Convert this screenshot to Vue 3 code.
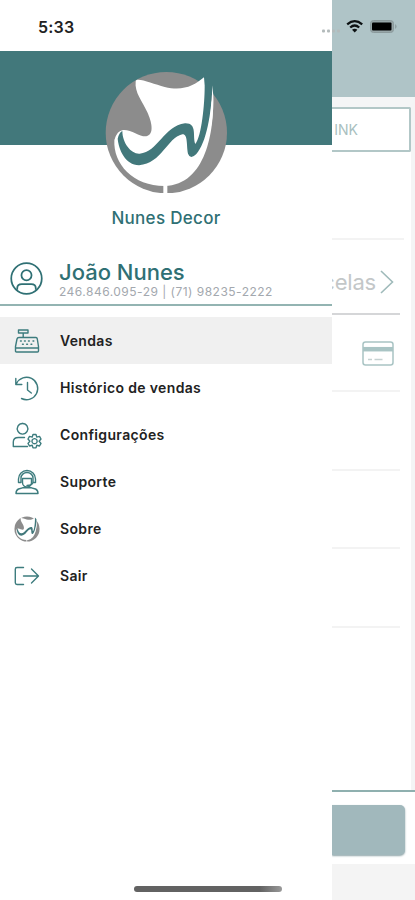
<template>
  <div class="screen">
    <aside class="drawer">
      <div class="status-bar">5:33</div>
      <header class="banner">
        <svg class="brand-logo" viewBox="46 36 368 364">
          <use href="#brand" />
        </svg>
      </header>
      <h1 class="brand-name">Nunes Decor</h1>

      <section class="profile">
        <svg class="avatar" viewBox="0 0 32 32">
          <circle cx="16" cy="16" r="14.8" />
          <circle cx="16" cy="12.8" r="4.9" />
          <path d="M7 27v-1.5Q7 21.500 11.500 21.500h9Q25 21.500 25 25.500V27" />
        </svg>
        <div class="profile-text">
          <div class="profile-name">{{ user.name }}</div>
          <div class="profile-info">{{ user.document }} | {{ user.phone }}</div>
        </div>
      </section>

      <nav class="menu">
        <a
          v-for="item in items"
          :key="item.id"
          :class="['menu-item', { active: activeId === item.id }]"
          @click="activeId = item.id"
        >
          <svg v-if="item.id === 'about'" class="menu-icon" viewBox="25 15 410 406">
            <use href="#brand" />
          </svg>
          <svg v-else class="menu-icon line" viewBox="0 0 30 28">
            <path v-for="d in item.paths" :key="d" :d="d" />
          </svg>
          <span>{{ item.label }}</span>
        </a>
      </nav>
    </aside>

    <main class="page">
      <div class="page-header"></div>
      <div class="page-body">
        <div class="link-box">INK</div>
        <div class="row first"></div>
        <div class="row parcels">
          <span>celas</span>
          <svg class="chevron" viewBox="0 0 14 24"><path d="M1 1l11.500 11L1 23" /></svg>
        </div>
        <div class="row card">
          <svg class="card-icon" viewBox="0 0 32 25">
            <rect x="1" y="1" width="30" height="23" rx="2.5" />
            <path class="stripe" d="M1 8.200h30" />
            <path class="digits" d="M6 18.500h4M12.500 18.500h8" />
          </svg>
        </div>
        <div class="row plain"></div>
        <div class="row plain"></div>
        <div class="row plain"></div>
      </div>
      <div class="page-action"><button type="button"></button></div>
      <div class="page-footer"></div>
    </main>

    <svg class="status-icons" viewBox="0 0 76 16">
      <g fill="#b3babb">
        <rect x="0" y="10.500" width="3" height="3" rx="1" />
        <rect x="5" y="10.500" width="3" height="3" rx="1" />
        <rect x="10" y="10.500" width="3" height="3" rx="1" />
        <rect x="15" y="10.500" width="3" height="3" rx="1" />
      </g>
      <g fill="none" stroke="#0c1112" stroke-width="2.3">
        <path d="M25.200 5.300Q32.700-1 40.200 5.300" />
        <path d="M28.200 8.500Q32.700 4.600 37.200 8.500" />
      </g>
      <path d="M30 10.700Q32.700 8.700 35.400 10.700L32.700 13.500z" fill="#0c1112" />
      <rect x="48.5" y="1.5" width="23" height="12" rx="3" fill="#97a6a8" stroke="#8b9a9c" />
      <rect x="50" y="3.500" width="19.500" height="8" rx="1" fill="#000" />
      <path d="M73.300 5v5q2.400-2.500 0-5" fill="#849294" />
    </svg>
    <div class="home-indicator"></div>

    <svg width="0" height="0" class="defs">
      <defs>
        <g id="brand">
          <circle cx="230" cy="218" r="182" fill="#8c8c8c" />
          <path
            fill="#fff"
            d="M138 64C140 50 190 72 225 81C280 94 312 78 343 52L355 150L370 112C374 210 350 376 225 378C130 378 70 312 74 240Q82 212 100 210C125 208 150 231 170 229C195 224 186 185 173 157C158 124 134 98 138 64z"
          />
          <path
            fill="#42787b"
            d="M84 236Q88 218 98 213C98 250 125 283 150 281C205 277 222 198 286 190C324 189 308 230 317 252C336 230 345 130 345 82V52L368 76C366 160 350 250 320 282Q302 300 295 281C290 255 295 222 278 223C232 234 217 310 148 316C107 314 87 270 84 236z"
          />
          <path fill="#fff" d="M368 76L371 108C373 190 355 250 334 288C358 230 366 150 368 76zM221 365h12v38h-12z" />
        </g>
      </defs>
    </svg>
  </div>
</template>

<script setup>
import { ref } from 'vue'

const user = {
  name: 'João Nunes',
  document: '246.846.095-29',
  phone: '(71) 98235-2222',
}

const activeId = ref('sales')

const items = [
  {
    id: 'sales',
    label: 'Vendas',
    paths: [
      'M6.500 3h9.500v3H6.500zM11.200 6v4M7 10.500h17Q25 10.500 25.300 12l1.200 7.500v4.500Q26.500 25 25.500 25h-21Q3.500 25 3.500 24v-4.500L5 12Q5.300 10.500 7 10.500zM3.500 21h23',
      'M8.500 14h.8M12.500 14h.8M16.500 14h.8M21 14h.8M10.500 17.200h.8M14.700 17.200h.8M19 17.200h.8',
    ],
  },
  {
    id: 'history',
    label: 'Histórico de vendas',
    paths: ['M4.500 9.500A11.200 11.200 0 1 1 9.500 24.500M3.800 4.500v6h6', 'M15.500 8.500v7.500l3.800 3'],
  },
  {
    id: 'settings',
    label: 'Configurações',
    paths: [
      'M10.500 2.500a5.300 5.300 0 1 0 .1 0M12.500 16.500H6.500Q1.300 16.500 1.300 21v4.500H15.500',
      'M21 13.500h3l.8 2.600 2.700-.7 1.500 2.600-1.900 2.200 1.900 2.200-1.500 2.600-2.700-.7-.8 2.600h-3l-.8-2.600-2.700.7-1.500-2.600 1.900-2.200-1.900-2.200 1.500-2.600 2.700.7z',
      'M22.500 17.600a2.600 2.600 0 1 0 .1 0',
    ],
  },
  {
    id: 'support',
    label: 'Suporte',
    paths: [
      'M6.500 12.500V11a8.500 8.500 0 0 1 17 0v2M9 12.500V10a6 5.500 0 0 1 12 0v4.500h2.500V11M6.500 11v3.500H9V12M21 14.500q-1 3-6 3',
      'M10.500 10.500h9v4a4.500 4.500 0 0 1-9 0zM10.500 19.800h9l4 1.200q2.500 1 2.500 4.500H4q0-3.500 2.500-4.500z',
    ],
  },
  { id: 'about', label: 'Sobre' },
  {
    id: 'logout',
    label: 'Sair',
    paths: ['M11.500 5.500H5Q3.300 5.500 3.300 7.200v13.600Q3.300 22.500 5 22.500h6.500', 'M11.500 14H26M19.500 7l7 7-7 7'],
  },
]
</script>

<style>
body {
  margin: 0;
}
</style>

<style scoped>
.screen {
  position: relative;
  display: flex;
  width: 415px;
  height: 900px;
  overflow: hidden;
  background: #fff;
  font-family: Inter, 'Liberation Sans', sans-serif;
}
.drawer {
  width: 332px;
  flex-shrink: 0;
  background: #fff;
}
.status-bar {
  height: 51px;
  padding: 1px 0 0 38px;
  box-sizing: border-box;
  line-height: 52px;
  font-size: 16px;
  font-weight: 600;
  letter-spacing: 0.2px;
  color: #222;
}
.banner {
  display: flex;
  justify-content: center;
  height: 94px;
  padding-top: 21px;
  box-sizing: border-box;
  background: #42787b;
}
.brand-logo {
  width: 122.7px;
  height: 121.3px;
  flex-shrink: 0;
}
.brand-name {
  margin: 62px 0 0;
  text-align: center;
  line-height: 22px;
  font-size: 17px;
  font-weight: 500;
  letter-spacing: 0.3px;
  color: #2f7074;
}
.profile {
  display: flex;
  align-items: flex-start;
  height: 77px;
  box-sizing: border-box;
  padding: 33px 0 0 10px;
  border-bottom: 2px solid #93b4b2;
}
.avatar {
  width: 33px;
  height: 33px;
  margin-right: 16px;
  fill: none;
  stroke: #2f7074;
  stroke-width: 1.7;
}
.profile-name {
  line-height: 23px;
  margin-top: -1px;
  font-size: 22px;
  font-weight: 500;
  color: #2f7074;
}
.profile-info {
  line-height: 14px;
  margin-top: 1px;
  font-size: 12px;
  letter-spacing: 0.48px;
  color: #a3a8ae;
  white-space: nowrap;
}
.menu {
  padding-top: 11px;
}
.menu-item {
  display: flex;
  align-items: center;
  height: 47px;
  padding-left: 12px;
  font-size: 14px;
  font-weight: 600;
  letter-spacing: 0.35px;
  color: #222;
  cursor: pointer;
}
.menu-item.active {
  background: #f0f0f0;
}
.menu-icon {
  width: 30px;
  height: 28px;
  margin-right: 18px;
}
.menu-icon.line {
  fill: none;
  stroke: #3d7c7e;
  stroke-width: 1.4;
  stroke-linecap: round;
  stroke-linejoin: round;
}
.page {
  display: flex;
  flex-direction: column;
  width: 83px;
  overflow: hidden;
  background: #fff;
}
.page-header {
  height: 97px;
  background: #afc4c7;
}
.page-body {
  flex: 1;
  border-top: 10px solid #f4f5f6;
  border-right: 4px solid #f4f4f5;
}
.link-box {
  display: flex;
  justify-content: flex-end;
  align-items: center;
  height: 45px;
  box-sizing: border-box;
  padding-right: 51px;
  border: 2px solid #b2c7c7;
  border-left: 0;
  border-radius: 0 2px 2px 0;
  background: #fff;
  font-size: 14px;
  color: #a9bfc0;
}
.row {
  box-sizing: border-box;
  margin-right: 11px;
  border-bottom: 2px solid #f3f3f3;
}
.row.first {
  height: 88px;
  margin-right: 7px;
}
.row.parcels {
  display: flex;
  justify-content: flex-end;
  align-items: center;
  height: 75px;
  padding: 10px 6px 0 0;
  border-bottom-color: #d5d6d8;
  font-size: 22px;
  letter-spacing: -0.2px;
  color: #c3c7c8;
}
.chevron {
  flex-shrink: 0;
  width: 14px;
  height: 24px;
  margin-left: 4px;
  fill: none;
  stroke: #9fbaba;
  stroke-width: 1.6;
}
.row.card {
  display: flex;
  justify-content: flex-end;
  height: 77px;
  padding: 26px 6px 0 0;
}
.card-icon {
  width: 32px;
  height: 25px;
  fill: none;
  stroke: #a9c4c4;
  stroke-width: 1.5;
}
.card-icon .stripe {
  stroke-width: 4.5;
}
.card-icon .digits {
  stroke: #c5d1d1;
}
.row.plain {
  height: 78.5px;
}
.page-action {
  height: 74px;
  box-sizing: border-box;
  padding: 13px 10px 9px 0;
  border-top: 2px solid #8fb0af;
}
.page-action button {
  display: block;
  width: 100%;
  height: 50px;
  border: 0;
  border-radius: 0 5px 5px 0;
  background: #a1b8bc;
  box-shadow: 0 1px 2px #8fa5a8;
}
.page-footer {
  height: 36px;
  background: #f4f4f4;
}
.status-icons {
  position: absolute;
  top: 19px;
  left: 322px;
  width: 76px;
  height: 16px;
}
.home-indicator {
  position: absolute;
  left: 134px;
  bottom: 8px;
  width: 148px;
  height: 6px;
  border-radius: 3px;
  background: linear-gradient(90deg, #626262 85%, #999);
}
.defs {
  position: absolute;
}
</style>
